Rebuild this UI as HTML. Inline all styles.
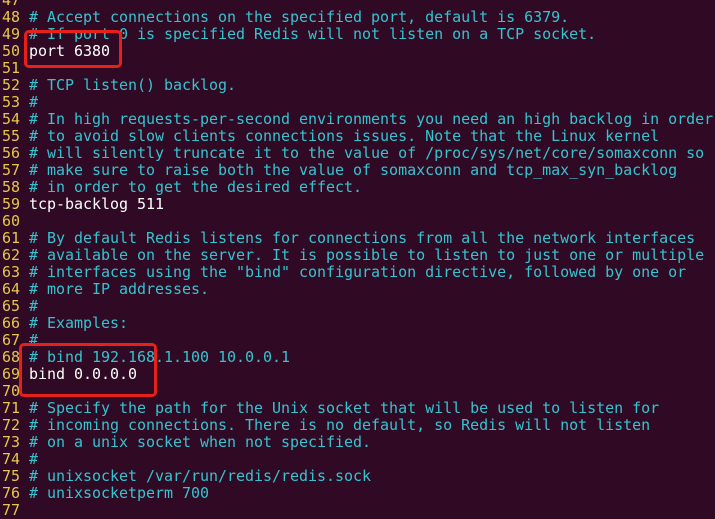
<!DOCTYPE html><html><head><style>
body{margin:0;width:715px;height:513px;background:#300a24;overflow:hidden;position:relative}
pre{position:absolute;left:2px;top:-8px;margin:0;font:15px/17px "DejaVu Sans Mono","Liberation Mono",monospace;letter-spacing:-0.03px;color:#fff}
.n{color:#e6c84a}.c{color:#34c4d0}
.box{position:absolute;border:3px solid #e8201c;border-radius:5px}
</style></head><body><pre>
<span class="n">47</span>
<span class="n">48</span> <span class="c"># Accept connections on the specified port, default is 6379.</span>
<span class="n">49</span> <span class="c"># If port 0 is specified Redis will not listen on a TCP socket.</span>
<span class="n">50</span> port 6380
<span class="n">51</span>
<span class="n">52</span> <span class="c"># TCP listen() backlog.</span>
<span class="n">53</span> <span class="c">#</span>
<span class="n">54</span> <span class="c"># In high requests-per-second environments you need an high backlog in order</span>
<span class="n">55</span> <span class="c"># to avoid slow clients connections issues. Note that the Linux kernel</span>
<span class="n">56</span> <span class="c"># will silently truncate it to the value of /proc/sys/net/core/somaxconn so</span>
<span class="n">57</span> <span class="c"># make sure to raise both the value of somaxconn and tcp_max_syn_backlog</span>
<span class="n">58</span> <span class="c"># in order to get the desired effect.</span>
<span class="n">59</span> tcp-backlog 511
<span class="n">60</span>
<span class="n">61</span> <span class="c"># By default Redis listens for connections from all the network interfaces</span>
<span class="n">62</span> <span class="c"># available on the server. It is possible to listen to just one or multiple</span>
<span class="n">63</span> <span class="c"># interfaces using the "bind" configuration directive, followed by one or</span>
<span class="n">64</span> <span class="c"># more IP addresses.</span>
<span class="n">65</span> <span class="c">#</span>
<span class="n">66</span> <span class="c"># Examples:</span>
<span class="n">67</span> <span class="c">#</span>
<span class="n">68</span> <span class="c"># bind 192.168.1.100 10.0.0.1</span>
<span class="n">69</span> bind 0.0.0.0
<span class="n">70</span>
<span class="n">71</span> <span class="c"># Specify the path for the Unix socket that will be used to listen for</span>
<span class="n">72</span> <span class="c"># incoming connections. There is no default, so Redis will not listen</span>
<span class="n">73</span> <span class="c"># on a unix socket when not specified.</span>
<span class="n">74</span> <span class="c">#</span>
<span class="n">75</span> <span class="c"># unixsocket /var/run/redis/redis.sock</span>
<span class="n">76</span> <span class="c"># unixsocketperm 700</span>
<span class="n">77</span>
</pre>
<div class="box" style="left:24px;top:30px;width:92px;height:32px"></div>
<div class="box" style="left:19px;top:343px;width:132px;height:48px"></div>
</body></html>
